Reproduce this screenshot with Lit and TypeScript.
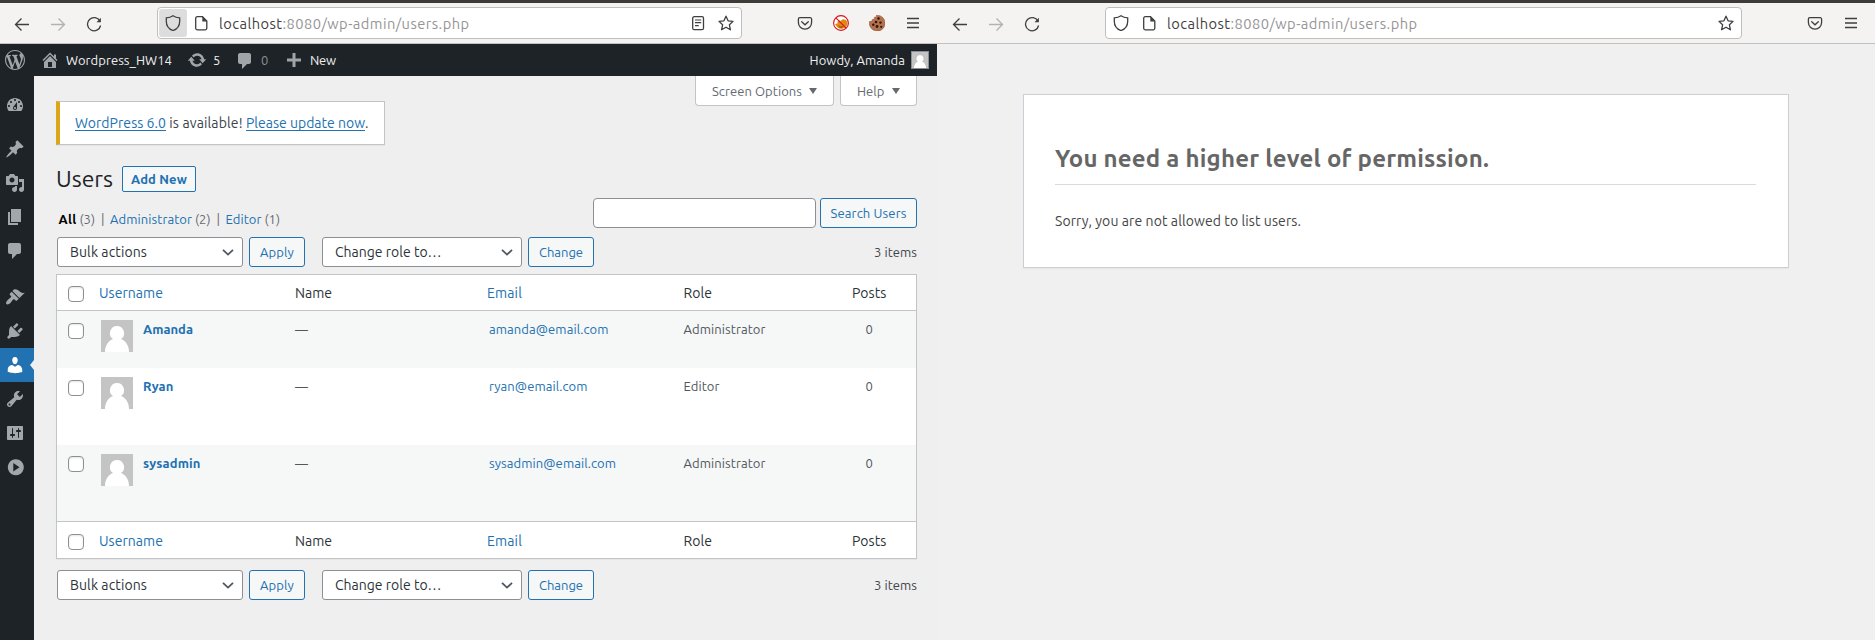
import { LitElement, html, css, svg, nothing } from "lit";
import { customElement, property } from "lit/decorators.js";
import { classMap } from "lit/directives/class-map.js";

const FAMILY = 'Ubuntu, "Noto Sans", "Open Sans", sans-serif';
const measurer = document.createElement("canvas").getContext("2d")!;

/** One line of text whose tracking is computed so that it fills a given width. */
function label(text: string, width: number, size: number, cls = "", bold = false) {
  measurer.font = `${bold ? 700 : 400} ${size}px ${FAMILY}`;
  const tracking = (width - measurer.measureText(text).width) / text.length;
  return html`<span class="label ${bold ? "bold" : ""} ${cls}"
    style="width:${width}px;font-size:${size}px;letter-spacing:${tracking.toFixed(3)}px">${text}</span>`;
}

const dash: Record<string, string> = {
  wordpress: "M20 10c0-5.51-4.49-10-10-10C4.48 0 0 4.49 0 10c0 5.52 4.48 10 10 10 5.51 0 10-4.48 10-10zM7.78 15.37L4.37 6.22c.55-.02 1.17-.08 1.17-.08.5-.06.44-1.13-.06-1.11 0 0-1.45.11-2.37.11-.18 0-.37 0-.58-.01C4.12 2.69 6.87 1.11 10 1.11c2.33 0 4.45.87 6.05 2.34-.68-.11-1.65.39-1.65 1.58 0 .74.45 1.36.9 2.1.35.61.55 1.36.55 2.46 0 1.49-1.4 5-1.4 5l-3.03-8.37c.54-.02.82-.17.82-.17.5-.05.44-1.25-.06-1.22 0 0-1.44.12-2.38.12-.87 0-2.33-.12-2.33-.12-.5-.03-.56 1.2-.06 1.22l.92.08 1.26 3.41zM17.41 10c.24-.64.74-1.87.43-4.25.7 1.29 1.05 2.71 1.05 4.25 0 3.29-1.73 6.24-4.4 7.78.97-2.59 1.94-5.2 2.92-7.78zM6.1 18.09C3.12 16.65 1.11 13.53 1.11 10c0-1.3.23-2.48.72-3.59C3.25 10.3 4.67 14.2 6.1 18.09zm4.03-6.63l2.58 6.98c-.86.29-1.76.45-2.71.45-.79 0-1.57-.11-2.29-.33.81-2.38 1.62-4.74 2.42-7.1z",
  home: "M16 8.5l1.53 1.53-1.06 1.06L10 4.6l-6.47 6.49-1.06-1.06L10 2.5l4 4v-2h2v4zm-6-2.46l6 5.99V18H4v-5.97zM12 17v-5H8v5h4z",
  update: "M10.2 3.28c3.53 0 6.43 2.61 6.92 6h2.08l-3.5 4-3.5-4h2.32c-.45-1.97-2.21-3.45-4.32-3.45-1.45 0-2.73.71-3.54 1.78L4.95 5.66C6.23 4.2 8.11 3.28 10.2 3.28zm-.4 13.44c-3.52 0-6.43-2.61-6.92-6H.8l3.5-4c1.17 1.33 2.33 2.67 3.5 4H5.48c.45 1.97 2.21 3.45 4.32 3.45 1.45 0 2.73-.71 3.54-1.78l1.71 1.95c-1.28 1.46-3.15 2.38-5.25 2.38z",
  comments: "M5 2h9c1.1 0 2 .9 2 2v7c0 1.1-.9 2-2 2h-2l-5 5v-5H5c-1.1 0-2-.9-2-2V4c0-1.1.9-2 2-2z",
  plus: "M17 8.5v3h-5.5V17h-3v-5.500H3v-3h5.500V3h3v5.500z",
  dashboard: "M3.76 16h12.48c1.1-1.37 1.76-3.11 1.76-5 0-4.42-3.58-8-8-8s-8 3.58-8 8c0 1.89.66 3.63 1.76 5zM10 4c.55 0 1 .45 1 1s-.45 1-1 1-1-.45-1-1 .45-1 1-1zM6 6c.55 0 1 .45 1 1s-.45 1-1 1-1-.45-1-1 .45-1 1-1zm8 0c.55 0 1 .45 1 1s-.45 1-1 1-1-.45-1-1 .45-1 1-1zm-5.37 5.55L12 7v6c0 1.1-.9 2-2 2s-2-.9-2-2c0-.57.24-1.08.63-1.45zM4 10c.55 0 1 .45 1 1s-.45 1-1 1-1-.45-1-1 .45-1 1-1zm12 0c.55 0 1 .45 1 1s-.45 1-1 1-1-.45-1-1 .45-1 1-1zm-5 3c0-.55-.45-1-1-1s-1 .45-1 1 .45 1 1 1 1-.45 1-1z",
  post: "M10.44 3.02l1.82-1.82 6.36 6.35-1.83 1.82c-1.05-.68-2.48-.57-3.41.36l-.75.75c-.92.93-1.04 2.35-.35 3.41l-1.83 1.82-2.41-2.41-2.8 2.79c-.42.42-3.38 2.71-3.8 2.29s1.86-3.39 2.28-3.81l2.79-2.79L4.1 9.36l1.83-1.82c1.05.69 2.48.57 3.4-.36l.75-.75c.93-.92 1.05-2.35.36-3.41z",
  media: "M13 11V4c0-.55-.45-1-1-1h-1.67L9 1H5L3.67 3H2c-.55 0-1 .45-1 1v7c0 .55.45 1 1 1h10c.55 0 1-.45 1-1zM7 4.5c1.38 0 2.5 1.12 2.5 2.5S8.38 9.5 7 9.5 4.5 8.38 4.5 7 5.62 4.5 7 4.5zM14 6h5v10.500c0 1.38-1.12 2.5-2.5 2.5S14 17.88 14 16.5s1.12-2.5 2.5-2.5c.17 0 .34.02.5.05V9h-3V6zm-4 8.050V13h2v3.500c0 1.38-1.12 2.5-2.5 2.5S7 17.88 7 16.5 8.12 14 9.5 14c.17 0 .34.02.5.05z",
  page: "M6 15V2h10v13H6zm-1 1h8v2H3V5h2v11z",
  appearance: "M14.48 11.06L7.41 3.99l1.5-1.5c.5-.56 2.3-.47 3.51.32 1.21.8 1.43 1.28 2.91 2.1 1.18.64 2.45 1.26 4.45.85zm-.71.71L6.7 4.7 4.93 6.47c-.39.39-.39 1.02 0 1.41l1.06 1.06c.39.39.39 1.03 0 1.42-.6.6-1.43 1.11-2.21 1.69-.35.26-.7.53-1.01.84C1.43 14.23.4 16.08 1.4 17.07c.99 1 2.84-.03 4.18-1.36.31-.31.58-.66.85-1.02.57-.78 1.08-1.61 1.69-2.21.39-.39 1.02-.39 1.41 0l1.06 1.06c.39.39 1.02.39 1.41 0z",
  plugins: "M13.11 4.36L9.87 7.6 8 5.73l3.24-3.24c.35-.34 1.05-.2 1.56.32.52.51.66 1.21.31 1.55zm-8 1.77l.91-1.12 9.01 9.01-1.19.84c-.71.71-2.63 1.16-3.82 1.16H6.14L4.9 17.26c-.59.59-1.54.59-2.12 0-.59-.58-.59-1.53 0-2.12l1.24-1.24v-3.88c0-1.13.4-3.19 1.09-3.89zm7.26 3.97l3.24-3.24c.34-.35 1.04-.21 1.55.31.52.51.66 1.21.31 1.55l-3.24 3.25z",
  users: "M10 9.25c-2.27 0-2.73-3.44-2.73-3.44C7 4.02 7.82 2 9.97 2c2.16 0 2.98 2.02 2.71 3.81 0 0-.41 3.44-2.68 3.44zm0 2.57L12.720 10c2.39 0 4.52 2.33 4.52 4.53v2.49s-3.65 1.13-7.24 1.13c-3.65 0-7.24-1.13-7.24-1.13v-2.49c0-2.25 1.94-4.48 4.47-4.48z",
  tools: "M16.68 9.77c-1.34 1.34-3.3 1.67-4.95.99l-5.41 6.52c-.99.99-2.59.99-3.58 0s-.99-2.59 0-3.57l6.52-5.42c-.68-1.65-.35-3.61.99-4.95 1.28-1.28 3.12-1.62 4.72-1.06l-2.89 2.89 2.82 2.82 2.86-2.87c.53 1.58.18 3.39-1.08 4.65zM3.81 16.21c.4.39 1.04.39 1.43 0 .4-.4.4-1.04 0-1.43-.39-.4-1.03-.4-1.43 0-.39.39-.39 1.03 0 1.43z",
  settings: "M18 16V4c0-.55-.45-1-1-1H3c-.55 0-1 .45-1 1v12c0 .55.45 1 1 1h14c.55 0 1-.45 1-1zM8 11h1c.55 0 1 .45 1 1s-.45 1-1 1H8v1.500c0 .28-.22.5-.5.5s-.5-.22-.5-.5V13H6c-.55 0-1-.45-1-1s.45-1 1-1h1V5.500c0-.28.22-.5.5-.5s.5.22.5.5V11zm5-2h-1c-.55 0-1-.45-1-1s.45-1 1-1h1V5.500c0-.28.22-.5.5-.5s.5.22.5.5V7h1c.55 0 1 .45 1 1s-.45 1-1 1h-1v5.500c0 .28-.22.5-.5.5s-.5-.22-.5-.5V9z",
  collapse: "M10.800 2.200a8 8 0 1 0 .01 0zM8.300 6l6.200 4.200-6.200 4.200z",
};
const dashicon = (name: string) => html`<svg class="dash" viewBox="0 0 20 20" width="20" height="20"
  fill="currentColor" fill-rule=${name === "collapse" ? "evenodd" : "nonzero"}><path d=${dash[name]}></path></svg>`;

const glyphs: Record<string, unknown> = {
  back: svg`<path d="M15 8.500H1.500M7.500 2.500l-6 6 6 6"/>`,
  forward: svg`<path d="M1 8.500h13.500M8.500 2.500l6 6-6 6"/>`,
  reload: svg`<path d="M14 5.200A6.600 6.600 0 1 0 14.600 9.500"/><path d="M10.500 6.300h4.400V1.800z" fill="currentColor" stroke="none"/>`,
  shield: svg`<path d="M8 .8c2 1.500 4.200 2 6.700 2v3.400c0 4.700-2.600 7.900-6.700 9.300-4.100-1.400-6.700-4.600-6.700-9.300V2.800C3.800 2.800 6 2.300 8 .8z"/>`,
  doc: svg`<path d="M4.200 1.700h5.300l4.300 4.300v7.300a1.500 1.500 0 0 1-1.500 1.500H4.200a1.500 1.500 0 0 1-1.500-1.500V3.200a1.500 1.500 0 0 1 1.500-1.500z"/><path d="M9.300 1.500v4.900h4.900z" fill="currentColor" stroke="none"/>`,
  reader: svg`<rect x="2.700" y="1.700" width="10.800" height="13" rx="1.500"/><path d="M5 5h6.200M5 7.700h6.200M5 10.700h3.700" stroke-width="1.200"/>`,
  star: svg`<path d="M8 1.200l2.100 4.600 4.900.6-3.600 3.400 1 5L8 12.300l-4.400 2.500 1-5L1 6.400l4.900-.6z" stroke-linejoin="round"/>`,
  pocket: svg`<path d="M2.800 2.700h10.400a1.400 1.400 0 0 1 1.400 1.400v3.400a6.600 6.600 0 0 1-13.200 0V4.100a1.400 1.400 0 0 1 1.400-1.400z"/><path d="M4.700 6.700L8 9.800l3.300-3.100" stroke-linecap="round"/>`,
  menu: svg`<path d="M2 3.500h12M2 8h12M2 12.500h12" stroke-width="1.300"/>`,
  fox: svg`<circle cx="8" cy="8" r="7.300" fill="#fff" stroke="none"/><path d="M2 9l2.500-.5c-.5-1.500.5-3 2-3.200l1 1c1-1.500 2.500-2.300 4-1.800 2 .5 3 2 3 4-.5 2.500-2 4.500-4.500 5C6.500 14.300 4 13 2 9z" fill="#e08a10" stroke="none"/><path d="M5 10l3 1.500 3-1.500-2 3.200-2.500-.5z" fill="#a85a10" stroke="none"/><circle cx="8" cy="8" r="7.400" stroke="#d8101c" stroke-width="1.100"/><path d="M2.800 2.800l10.400 10.400" stroke="#d8101c" stroke-width="1.100"/>`,
  cookie: svg`<path d="M7.500.2c.2 1.600-.6 2.200-2 2 .2 1.400-.5 2.300-2.200 2.300.2 1.500-1 2.200-2.800 2C-.4 12 3.500 16 8.200 16 12.700 16 16 12.600 16 8.200 16 3.700 12.500 0 7.500.2z" fill="#b5714c" stroke="#7e452b" stroke-width=".5"/><g fill="#2c1712" stroke="none"><circle cx="9.500" cy="3.500" r="1.200"/><circle cx="7" cy="7" r="1.300"/><circle cx="11.500" cy="7.600" r="1.200"/><circle cx="4.300" cy="9.800" r="1.200"/><circle cx="8" cy="11.500" r="1.400"/><circle cx="12.200" cy="11.800" r="1.100"/></g>`,
};
const glyph = (name: string, dim = false) => html`<svg class="glyph ${dim ? "dim" : ""}" viewBox="0 0 16 16"
  width="16" height="16" fill="none" stroke="currentColor" stroke-width="1.300">${glyphs[name]}</svg>`;

const shared = css`
  * { box-sizing: border-box; }
  svg { display: block; flex: none; }
  .label { display: inline-block; flex: none; white-space: pre; line-height: 20px; }
  .bold { font-weight: 700; }
`;

@customElement("browser-toolbar")
export class BrowserToolbar extends LitElement {
  @property({ type: Boolean, reflect: true }) compact = false;

  static styles = [shared, css`
    :host { display: block; box-sizing: border-box; flex: none; height: 44px; border-top: 3px solid #3c3b37; border-bottom: 1px solid #c3c2c1; background: #f4f3f1; color: #3f3f3f; }
    .bar { height: 40px; display: flex; align-items: center; padding: 0 16px 0 14px; }
    :host([compact]) .bar { padding: 0 16px 0 15px; }
    .nav { display: flex; gap: 20px; margin-top: 1px; width: 143px; flex: none; }
    :host([compact]) .nav { width: 153px; }
    .dim { color: #b3b2b1; }
    .url { flex: 1; height: 32px; display: flex; align-items: center; background: #fff; border: 1px solid #c0bfbe; border-radius: 4px; padding: 0 7px 0 1px; }
    .shield { width: 28px; height: 28px; display: grid; place-items: center; border-radius: 3px; margin-right: 6px; }
    :host(:not([compact])) .shield { background: #dddddd; }
    .address { display: flex; margin-left: 10px; flex: 1; margin-top: 1px; }
    .rest { color: #959595; }
    .tail { display: flex; gap: 12px; }
    .actions { display: flex; gap: 20px; margin-left: 55px; }
    :host([compact]) .actions { margin-left: 65px; }
  `];

  render() {
    return html`<div class="bar">
      <div class="nav">${glyph("back")}${glyph("forward", true)}${glyph("reload")}</div>
      <div class="url">
        <div class="shield">${glyph("shield")}</div>${glyph("doc")}
        <div class="address">${label("localhost", 63.500, 14.670)}${label(":8080/wp-admin/users.php", 187, 14.670, "rest")}</div>
        <div class="tail">${this.compact ? nothing : glyph("reader")}${glyph("star")}</div>
      </div>
      <div class="actions">${glyph("pocket")}${this.compact ? nothing : [glyph("fox"), glyph("cookie")]}${glyph("menu")}</div>
    </div>`;
  }
}

interface User { name: string; nameWidth: number; email: string; emailWidth: number; role: string; roleWidth: number; size: string; }

const users: User[] = [
  { name: "Amanda", nameWidth: 50, email: "amanda@email.com", emailWidth: 119.500, role: "Administrator", roleWidth: 82, size: "short" },
  { name: "Ryan", nameWidth: 30.500, email: "ryan@email.com", emailWidth: 98.500, role: "Editor", roleWidth: 36, size: "tall" },
  { name: "sysadmin", nameWidth: 57.500, email: "sysadmin@email.com", emailWidth: 127, role: "Administrator", roleWidth: 82, size: "last" },
];

@customElement("wp-users")
export class WpUsers extends LitElement {
  static styles = [shared, css`
    :host { display: flex; flex-direction: column; flex: 1; background: #efefef; color: #3c434a; }
    .adminbar { height: 32px; background: #1d2327; color: #f0f0f1; display: flex; align-items: center; padding: 0 8px 0 5px; }
    .adminbar .dash { color: #a0a5aa; }
    .g15 { margin-left: 15px; } .g6 { margin-left: 6px; } .g16 { margin-left: 16px; } .g17 { margin-left: 17px; }
    .down { margin-top: 2px; }
    .muted { color: #8c9196; }
    .howdy { margin-left: auto; display: flex; align-items: center; gap: 6px; }
    .frame { border: 1px solid #8c8f94; }
    .body { flex: 1; display: flex; }
    .side { width: 34px; flex: none; background: #1d2327; color: #a2a7ac; padding-top: 12px; }
    .item { height: 34px; padding: 7px 5px; position: relative; }
    .item.gap10 { margin-top: 10px; } .item.gap12 { margin-top: 12px; }
    .item.current { background: #2271b1; color: #fff; }
    .notch { position: absolute; right: 0; top: 12px; border: 5px solid transparent; border-left: 0; border-right: 4px solid #efefef; }
    .content { flex: 1; padding: 0 20px 0 22px; }
    .tabs { display: flex; justify-content: flex-end; gap: 6px; height: 25px; }
    .tab { width: 139px; height: 30px; display: flex; align-items: center; gap: 7px; background: #fff; border: 1px solid #c3c4c7; border-top: 0; border-radius: 0 0 4px 4px; padding: 1px 16px 0; color: #646970; }
    .tab.help { width: 77px; }
    .caret { border: 4px solid transparent; border-top: 6px solid #646970; border-bottom: 0; margin-bottom: 1px; }
    .notice { width: 329px; height: 44px; background: #fff; border: 1px solid #c3c4c7; border-left: 4px solid #dba617; padding: 11px 0 0 15px; display: flex; box-shadow: 0 1px 1px rgba(0,0,0,.04); }
    .link { color: #2271b1; }
    .under { height: 18px; border-bottom: 1px solid #2271b1; }
    .heading { display: flex; align-items: center; margin-top: 21px; height: 26px; color: #1d2327; }
    .btn { display: grid; place-items: center; background: #f6f7f7; color: #2271b1; border: 1px solid #2271b1; border-radius: 3px; height: 30px; flex: none; }
    .add { width: 74px; height: 26px; margin-left: 9px; border-radius: 2px; }
    .filters { display: flex; margin-top: 6px; height: 30px; padding-left: 2.500px; }
    .views { display: flex; flex: 1; padding-top: 11px; color: #646970; }
    .black { color: #000; }
    .g3 { margin-left: 3px; } .bar { margin: 0 5px 0 6px; }
    .search { width: 223px; height: 30px; border-radius: 4px; background: #fff; margin-right: 4px; }
    .find { width: 97px; }
    .nav { display: flex; height: 30px; margin-top: 9px; padding-left: 1px; align-items: center; }
    .nav.bottom { margin-top: 11px; }
    .select { height: 30px; background: #fff; border-radius: 3px; display: flex; align-items: center; justify-content: space-between; padding: 0 8px 1px 12px; color: #2c3338; }
    .bulk { width: 186px; } .role { width: 200px; margin-left: 17px; }
    .apply { width: 56px; margin-left: 6px; } .change { width: 66px; margin-left: 6px; }
    .count { margin-left: auto; margin-bottom: 1px; }
    .table { margin-top: 7px; height: 285px; background: #fff; border: 1px solid #c3c4c7; box-shadow: 0 1px 1px rgba(0,0,0,.04); }
    .row { display: grid; grid-template-columns: 42px 196px 192px 196.500px 1fr; }
    .head { height: 36px; border-bottom: 1px solid #c3c4c7; padding-top: 8px; color: #2c3338; }
    .foot { height: 37px; border-top: 1px solid #c3c4c7; padding-top: 9px; color: #2c3338; }
    .check { width: 16px; height: 16px; border: 1px solid #8c8f94; border-radius: 4px; background: #fff; margin: 3px 0 0 11px; box-shadow: inset 0 1px 2px rgba(0,0,0,.1); }
    .row.user { color: #50575e; padding-top: 8px; }
    .user.short { height: 57px; } .user.tall { height: 77px; } .user.last { height: 76px; }
    .user.shade { background: #f6f7f7; }
    .user .check { margin-top: 4px; } .user.last .check { margin-top: 3px; }
    .who { display: flex; gap: 10px; padding-left: 2px; }
    .who svg { margin-top: 1px; }
    .mail { padding-left: 2px; }
    .cells { display: flex; justify-content: space-between; padding-right: 29.500px; }
    .user .cells { padding-right: 43.500px; }
  `];

  avatar(size: number) {
    return html`<svg width=${size} height=${size} viewBox="0 0 32 32"><path fill="#c4c4c4" d="M0 0h32v32H0z"/>
      <path fill="#fff" d="M16 6a7.200 7.200 0 0 1 4 13.100C25 21 28 26 28 32H4c0-6 3-11 8-12.900A7.200 7.200 0 0 1 16 6z"/></svg>`;
  }

  labels(cls: string) {
    return html`<div class="row ${cls}"><div class="check"></div>
      ${label("Username", 64, 14, "link")}${label("Name", 37, 14)}${label("Email", 35, 14, "link")}
      <div class="cells">${label("Role", 28.500, 14)}${label("Posts", 34.500, 14)}</div></div>`;
  }

  select(cls: string, text: string, width: number) {
    return html`<div class="select frame ${cls}">${label(text, width, 14)}
      <svg width="12" height="12" viewBox="0 0 12 12" fill="none" stroke="#50575e" stroke-width="1.800"><path d="M1 3.800l5 4.800 5-4.800"/></svg></div>`;
  }

  tablenav(cls = "") {
    return html`<div class="nav ${cls}">
      ${this.select("bulk", "Bulk actions", 77)}<div class="btn apply">${label("Apply", 34, 13)}</div>
      ${this.select("role", "Change role to…", 106.500)}<div class="btn change">${label("Change", 44, 13)}</div>
      ${label("3 items", 43, 13, "count")}</div>`;
  }

  render() {
    const menu = ["dashboard", "post", "media", "page", "comments", "appearance", "plugins", "users", "tools", "settings", "collapse"];
    return html`
      <div class="adminbar">
        ${dashicon("wordpress")}<span class="g15">${dashicon("home")}</span>
        ${label("Wordpress_HW14", 106, 13, "g6")}
        <span class="g15">${dashicon("update")}</span>${label("5", 7, 13, "g6")}
        <span class="g15 down">${dashicon("comments")}</span>${label("0", 7, 13, "g6 muted")}
        <span class="g16">${dashicon("plus")}</span>${label("New", 26, 13, "g6")}
        <div class="howdy">${label("Howdy, Amanda", 95.500, 13)}<div class="frame">${this.avatar(16)}</div></div>
      </div>
      <div class="body">
        <div class="side">${menu.map(name => html`<div class="item ${classMap({
          current: name === "users", gap10: name === "post", gap12: name === "appearance",
        })}">${dashicon(name)}${name === "users" ? html`<i class="notch"></i>` : nothing}</div>`)}</div>
        <div class="content">
          <div class="tabs">
            <div class="tab">${label("Screen Options", 90, 13)}<i class="caret"></i></div>
            <div class="tab help">${label("Help", 27.500, 13)}<i class="caret"></i></div>
          </div>
          <div class="notice">${label("WordPress 6.0", 91, 14, "link under")}${label(" is available! ", 80, 14)}${label("Please update now", 119, 14, "link under")}${label(".", 4, 14)}</div>
          <div class="heading">${label("Users", 57, 23)}<div class="btn add">${label("Add New", 56, 13, "", true)}</div></div>
          <div class="filters">
            <div class="views">
              ${label("All", 18, 13, "black", true)}${label("(3)", 15.500, 13, "g3")}${label("|", 4, 13, "bar")}
              ${label("Administrator", 82, 13, "link")}${label("(2)", 15.500, 13, "g3")}${label("|", 4, 13, "bar")}
              ${label("Editor", 36, 13, "link")}${label("(1)", 15.500, 13, "g3")}
            </div>
            <div class="search frame"></div><div class="btn find">${label("Search Users", 76, 13)}</div>
          </div>
          ${this.tablenav()}
          <div class="table">
            ${this.labels("head")}
            ${users.map((u, i) => html`<div class="row user ${u.size} ${i % 2 ? "" : "shade"}">
              <div class="check"></div>
              <div class="who">${this.avatar(32)}${label(u.name, u.nameWidth, 13, "link", true)}</div>
              ${label("—", 13, 13)}
              <div class="mail">${label(u.email, u.emailWidth, 13, "link")}</div>
              <div class="cells">${label(u.role, u.roleWidth, 13)}${label("0", 7, 13)}</div>
            </div>`)}
            ${this.labels("foot")}
          </div>
          ${this.tablenav("bottom")}
        </div>
      </div>`;
  }
}

@customElement("permission-notice")
export class PermissionNotice extends LitElement {
  static styles = [shared, css`
    :host { display: block; flex: 1; padding: 50px 86px 0; background: #f0f0f0; }
    .card { width: 766px; height: 174px; background: #fff; border: 1px solid #ccd0d4; padding: 48px 32px 0 31px; box-shadow: 0 1px 1px rgba(0,0,0,.04); }
    .title { height: 42px; border-bottom: 1px solid #dadada; color: #666; padding-top: 6px; }
    .text { color: #444; margin-top: 26px; display: flex; }
  `];
  render() {
    return html`<div class="card"><div class="title">${label("You need a higher level of permission.", 434, 24, "", true)}</div>
      <div class="text">${label("Sorry, you are not allowed to list users.", 246, 14)}</div></div>`;
  }
}

@customElement("app-root")
export class AppRoot extends LitElement {
  static styles = css`
    :host { display: flex; width: 1875px; height: 640px; overflow: hidden; font-family: Ubuntu, "Noto Sans", "Open Sans", sans-serif; }
    .window { display: flex; flex-direction: column; width: 938px; flex: none; }
    .first { width: 937px; }
  `;
  render() {
    return html`
      <section class="window first"><browser-toolbar></browser-toolbar><wp-users></wp-users></section>
      <section class="window"><browser-toolbar compact></browser-toolbar><permission-notice></permission-notice></section>`;
  }
}
